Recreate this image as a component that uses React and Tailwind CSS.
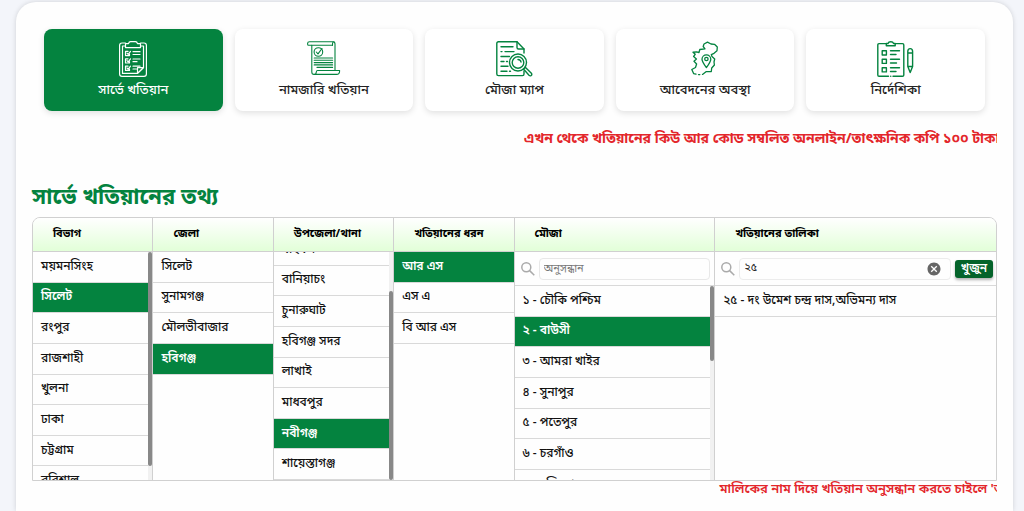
import React, { useState } from 'react';
import { IoMdCloseCircle } from 'react-icons/io';

function SurveyIcon() {
  return (
    <svg viewBox="0 0 28 36" className="h-9 w-7" fill="none" stroke="currentColor" strokeWidth="1.2" strokeLinejoin="round" strokeLinecap="round">
      <path d="M6.5 2H3Q.6 2 .6 4.4V33Q.6 35.4 3 35.4H25Q27.4 35.4 27.4 33V4.400Q27.4 2 25 2H21.500" />
      <path d="M6.500 5H3.500V32.400H18.500L24.500 26.600V5H21.500" />
      <path d="M18.500 32.400V26.600H24.500Z" />
      <path d="M6.500 6.600V2.600H9.500Q10 .6 11.500.6H16.500Q18 .6 18.500 2.600H21.500V6.600Z" />
      <path d="M10.500 13V14.600H6.500V10.400H9M8 12.200L9.200 13.400L11.500 10.400" />
      <path d="M10.500 20.500V22H6.500V17.800H9M8 19.600L9.200 20.800L11.500 17.800" />
      <path d="M10.500 28V29.400H6.500V25.200H9M8 27L9.200 28.200L11.500 25.200" />
      <path d="M14 10.700H21M14 13.500H21M14 18H21M14 20.700H18M14 25.200H21M14 28H17.500" />
    </svg>
  );
}

function MutationIcon() {
  return (
    <svg viewBox="0 0 34 36" className="h-9 w-[34px]" fill="none" stroke="currentColor" strokeWidth="1.1" strokeLinejoin="round" strokeLinecap="round">
      <path d="M25.500 4.300H1.500Q.6 4.300.6 3V2.600Q.6.8 2.500.8H26Q28 .8 28 3V29.500" />
      <path d="M25.500 4.300V2.800Q25.500.8 27 .8M4.800 4.300V31Q4.800 33.400 7 33.400H29.500Q32.600 33.400 32.600 30V29.500H10.500Q9.500 29.500 9.300 31Q9.200 33.400 7 33.400" />
      <circle cx="11.400" cy="11" r="4.300" />
      <path d="M9.300 11L11 12.900L15 7.500" />
      <path d="M7.200 17H25.600M7.200 19.300H25.600M7.200 21.600H25.600M7.200 23.900H25.600M10 26.400H25.600" />
    </svg>
  );
}

function MouzaMapIcon() {
  return (
    <svg viewBox="0 0 37 36" className="h-9 w-[37px]" fill="none" stroke="currentColor" strokeWidth="1.4" strokeLinejoin="round" strokeLinecap="round">
      <path d="M28 12V8L21 .8H2.500Q.8 .8 .8 2.500V33Q.8 34.600 2.500 34.600H26.500Q28 34.600 28 33V30" />
      <path d="M21 .8V6.500Q21 8 22.500 8H28" />
      <path d="M5 5.700H17M5 10.600H6M9 10.600H18M5 15.500H13.500M5 20.500H8M10.500 20.500H11.500M5 25.300H12M5 30.200H11M13.500 30.200H14.500" />
      <circle cx="22" cy="21.500" r="8.500" />
      <circle cx="22" cy="21.500" r="5.800" />
      <path d="M22 18.500Q24.600 18.700 25 21" />
      <path d="M27.500 28L29.500 26.500L35.600 32.500Q36.200 34 35 34.700Q34 35.200 33 34.300Z" />
    </svg>
  );
}

function StatusIcon() {
  return (
    <svg viewBox="0 0 28 36" className="h-9 w-7" fill="none" stroke="currentColor" strokeWidth="1.3" strokeLinejoin="round" strokeLinecap="round">
      <path d="M5 33.200L2.600 32.600L.8 28.500L4.500 26.500L5.600 23L3 20.300L5.400 18L2.600 15.500L4.200 13.300L2 11.200L5.500 10.800L8 11.500L8.800 8.500L14 7.800L12.200 5.500L13 3L16.500 1.200L20 3L23.500 3.300L26.300 6L26 9.800L23 12.300L20.300 13.600L21 15.500L23.700 18L23 21L23.400 24L20.700 27L20.300 30.500L15 30.700L11.500 33.400" />
      <path d="M7.500 33.600H8.800" />
      <path d="M15.400 26.500C12 22 11 20.500 11 18.200A4.400 4.400 0 0 1 19.800 18.200C19.800 20.500 18.800 22 15.400 26.500Z" />
      <circle cx="15.400" cy="18" r="1.700" />
    </svg>
  );
}

function GuideIcon() {
  return (
    <svg viewBox="0 0 37 36" className="h-9 w-[37px]" fill="none" stroke="currentColor" strokeWidth="1.4" strokeLinejoin="round" strokeLinecap="round">
      <path d="M9 2.600H2Q.8 2.600 .8 4V34Q.8 35.200 2 35.200H11.500M16 35.200H25.500Q26.800 35.200 26.800 34V4Q26.800 2.600 25.500 2.600H18.500M13.700 35.200H13.800" />
      <path d="M9.300 4.800V2.500H11Q11.500.8 13.800.8Q16 .8 16.600 2.500H18.200V4.800Z" />
      <path d="M5.200 9.800H9.400V14H5.200ZM5.200 18.200H9.400V22.400H5.200ZM5.200 26.700H9.400V30.900H5.200Z" />
      <path d="M13.500 9.800H22.500M13.500 13.500H19M13.500 18.200H22.500M13.500 22H19.500M13.500 26.700H22.500M13.500 30.500H19" />
      <path d="M30.800 10.500Q30.800 7.600 33.200 7.600Q35.600 7.600 35.600 10.500V25.500L33.200 31.500L30.800 25.500ZM30.800 12H35.600M30.800 25.500H35.600" />
    </svg>
  );
}

const tabs = [
  { label: 'সার্ভে খতিয়ান', Icon: SurveyIcon },
  { label: 'নামজারি খতিয়ান', Icon: MutationIcon },
  { label: 'মৌজা ম্যাপ', Icon: MouzaMapIcon },
  { label: 'আবেদনের অবস্থা', Icon: StatusIcon },
  { label: 'নির্দেশিকা', Icon: GuideIcon },
];

const headers = ['বিভাগ', 'জেলা', 'উপজেলা/থানা', 'খতিয়ানের ধরন', 'মৌজা', 'খতিয়ানের তালিকা'];
const divisions = ['ময়মনসিংহ', 'সিলেট', 'রংপুর', 'রাজশাহী', 'খুলনা', 'ঢাকা', 'চট্টগ্রাম', 'বরিশাল'];
const districts = ['সিলেট', 'সুনামগঞ্জ', 'মৌলভীবাজার', 'হবিগঞ্জ'];
const upazilas = ['বাহুবল', 'বানিয়াচং', 'চুনারুঘাট', 'হবিগঞ্জ সদর', 'লাখাই', 'মাধবপুর', 'নবীগঞ্জ', 'শায়েস্তাগঞ্জ'];
const khatianTypes = ['আর এস', 'এস এ', 'বি আর এস'];
const mouzas = [
  '১ - চৌকি পশ্চিম',
  '২ - বাউসী',
  '৩ - আমরা খাইর',
  '৪ - সুনাপুর',
  '৫ - পতেপুর',
  '৬ - চরগাঁও',
  '৭ - হলিমপুর',
];

function PickList({ items, initial, thumb, atEnd }) {
  const [selected, setSelected] = useState(initial);

  return (
    <div className="flex min-h-0 flex-1">
      <div className={`flex min-w-0 flex-1 flex-col overflow-hidden ${atEnd ? 'justify-end' : ''}`}>
        <ul className="grid h-[245px] shrink-0 grid-rows-8">
          {items.map((item) => (
            <li key={item} className="border-b border-[#d9d9d9]">
              <button
                type="button"
                onClick={() => setSelected(item)}
                className={`flex h-full w-full items-center truncate pl-2 text-left text-xs leading-5 ${
                  item === selected ? 'bg-[#04833f] font-semibold text-white' : 'font-medium text-[#111]'
                }`}
              >
                {item}
              </button>
            </li>
          ))}
        </ul>
      </div>
      {/* Scroll track */}
      {thumb && (
        <div className="w-1 shrink-0 bg-[#f1f1f1]">
          <div className={`rounded-full bg-[#888] ${thumb}`} />
        </div>
      )}
    </div>
  );
}

function SearchIcon() {
  return (
    <svg viewBox="0 0 14 14" className="size-[14px] shrink-0 text-[#aaa]" fill="none" stroke="currentColor" strokeWidth="1.5">
      <circle cx="5.300" cy="5.300" r="4.500" />
      <path d="M8.600 8.600L13.300 13.300" />
    </svg>
  );
}

function App() {
  const [activeTab, setActiveTab] = useState(0);
  const [khatian, setKhatian] = useState('২৫');

  return (
    <div className="flex min-h-screen bg-[#f3f5fa] pt-0.5 pr-[11px] pl-4 font-['Noto_Sans_Bengali','Noto_Sans',sans-serif] text-[#222]">
      <main className="min-w-0 flex-1 rounded-t-[20px] bg-[#fefefe] px-4 pt-[27px] shadow-[0_0_5px_rgba(0,0,0,0.15)]">
        {/* Service tabs */}
        <nav className="grid grid-cols-5 gap-3 px-3">
          {tabs.map(({ label, Icon }, i) => (
            <button
              key={label}
              type="button"
              onClick={() => setActiveTab(i)}
              className={`flex h-[82px] flex-col items-center gap-0.5 rounded-lg pt-3 shadow-[0_2px_6px_rgba(0,0,0,0.12)] ${
                i === activeTab ? 'bg-[#04833f] text-white' : 'bg-white text-[#04833f]'
              }`}
            >
              <Icon />
              <span className={`text-[13px] leading-6 font-medium ${i === activeTab ? 'text-white' : 'text-[#222]'}`}>
                {label}
              </span>
            </button>
          ))}
        </nav>

        <div className="mt-[17px] overflow-hidden">
          <p className="pl-[492px] text-sm leading-6 font-bold whitespace-nowrap text-[#e3262b]">
            এখন থেকে খতিয়ানের কিউ আর কোড সম্বলিত অনলাইন/তাৎক্ষনিক কপি ১০০ টাকা
          </p>
        </div>

        <h1 className="mt-[29px] text-[22px] leading-9 font-bold text-[#04833f]">সার্ভে খতিয়ানের তথ্য</h1>

        {/* Khatian browser */}
        <section className="overflow-hidden rounded-t-lg border border-[#d0d0d0]">
          <div className="grid h-[34px] grid-cols-[3fr_3fr_3fr_3fr_5fr_7fr] divide-x divide-[#d0d0d0] border-b border-[#d0d0d0] bg-linear-to-b from-white to-[#e2ffd8]">
            {headers.map((header) => (
              <h2 key={header} className="pl-5 text-[11px] leading-8 font-bold text-black">
                {header}
              </h2>
            ))}
          </div>

          <div className="grid h-[228px] grid-cols-[3fr_3fr_3fr_3fr_5fr_7fr] divide-x divide-[#d0d0d0]">
            <div className="flex min-h-0 min-w-0 flex-col">
              <PickList items={divisions} initial="সিলেট" thumb="h-[214px]" />
            </div>
            <div className="flex min-h-0 min-w-0 flex-col">
              <PickList items={districts} initial="হবিগঞ্জ" />
            </div>
            <div className="flex min-h-0 min-w-0 flex-col">
              <PickList items={upazilas} initial="নবীগঞ্জ" thumb="mt-[39px] h-[189px]" atEnd />
            </div>
            <div className="flex min-h-0 min-w-0 flex-col">
              <PickList items={khatianTypes} initial="আর এস" />
            </div>

            <div className="flex min-h-0 min-w-0 flex-col">
              <label className="flex h-[34px] shrink-0 items-center gap-1 border-b border-[#d9d9d9] pr-1 pl-[6px]">
                <SearchIcon />
                <input
                  type="text"
                  aria-label="মৌজা অনুসন্ধান"
                  placeholder="অনুসন্ধান"
                  className="h-[22px] min-w-0 flex-1 rounded border border-[#e8e8e8] px-1 text-[11px] placeholder:text-[#777]"
                />
              </label>
              <PickList items={mouzas} initial="২ - বাউসী" thumb="h-[75px]" />
            </div>

            <div className="flex min-h-0 min-w-0 flex-col">
              <div className="flex h-[34px] shrink-0 items-center gap-1 border-b border-[#d9d9d9] pr-[3px] pl-[6px]">
                <SearchIcon />
                <div className="flex h-[22px] min-w-0 flex-1 items-center rounded border border-[#ececec] pr-2">
                  <input
                    type="text"
                    aria-label="খতিয়ান অনুসন্ধান"
                    value={khatian}
                    onChange={(e) => setKhatian(e.target.value)}
                    className="min-w-0 flex-1 px-1 text-[11px] outline-none"
                  />
                  <button type="button" aria-label="মুছুন" onClick={() => setKhatian('')}>
                    <IoMdCloseCircle className="size-4 text-[#666]" />
                  </button>
                </div>
                <button
                  type="button"
                  className="h-[18px] w-[38px] rounded-[3px] bg-[#04632a] text-xs leading-[18px] font-semibold text-white shadow-[0_2px_3px_rgba(0,0,0,0.3)]"
                >
                  খুজুন
                </button>
              </div>
              <PickList items={['২৫ - দং উমেশ চন্দ্র দাস,অভিমন্য দাস']} />
            </div>
          </div>
        </section>

        <div className="grid grid-cols-[17fr_7fr]">
          <div className="col-start-2 overflow-hidden">
            <p className="pl-1 text-[13px] leading-[18px] font-semibold whitespace-nowrap text-[#e3262b]">
              মালিকের নাম দিয়ে খতিয়ান অনুসন্ধান করতে চাইলে 'অধিকতর অনুসন্ধান'
            </p>
          </div>
        </div>
      </main>
    </div>
  );
}

export default App;
